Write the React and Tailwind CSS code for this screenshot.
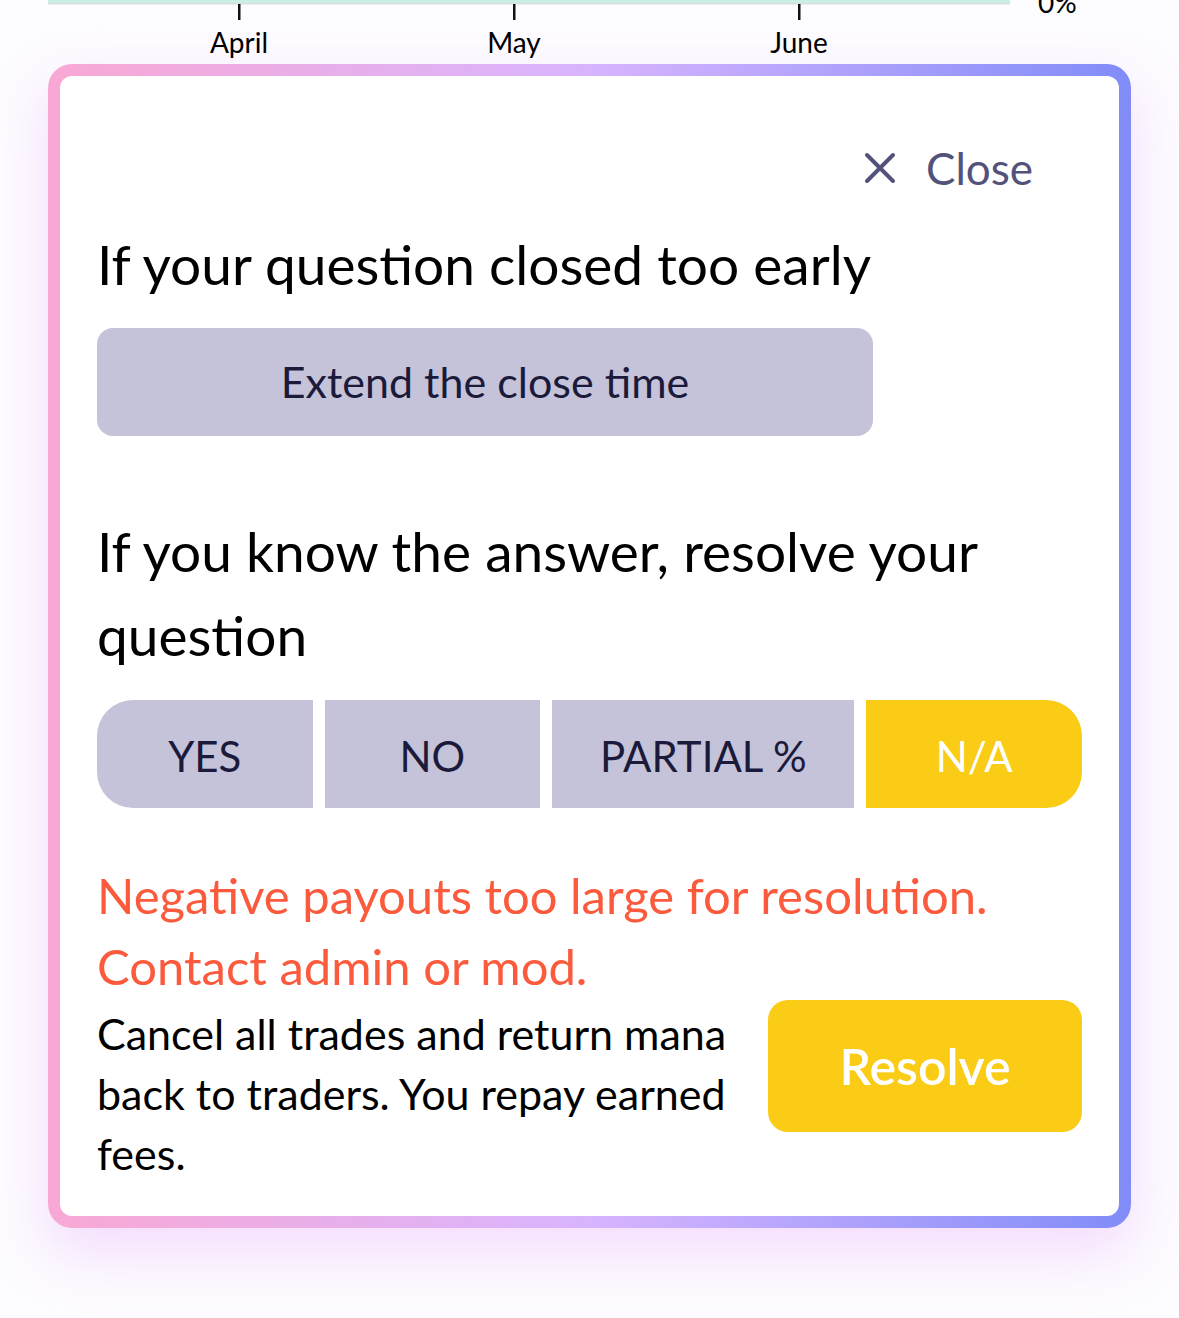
const FONT = { fontFamily: 'Lato, "Noto Sans", sans-serif' }

const TICKS = [
  { label: 'April', x: 191 },
  { label: 'May', x: 466 },
  { label: 'June', x: 751 },
]

function ChartStrip() {
  return (
    <div className="relative h-[64px] w-full">
      <svg className="absolute left-[48px] top-0" width="962" height="24" viewBox="0 0 962 24">
        <rect x="0" y="0" width="962" height="3" fill="#cbeee2" />
        <rect x="0" y="3" width="962" height="1.5" fill="#d9dde0" />
        {TICKS.map(t => (
          <rect key={t.label} x={t.x - 1} y="4" width="2.5" height="16" fill="#111" />
        ))}
      </svg>
      {TICKS.map(t => (
        <span
          key={t.label}
          className="absolute top-[25px] -translate-x-1/2 text-[28px] leading-[34px] text-black"
          style={{ left: 48 + t.x }}
        >
          {t.label}
        </span>
      ))}
      <span className="absolute left-[1038px] top-[-15px] text-[28px] leading-[34px] text-black">0%</span>
    </div>
  )
}

function CloseIcon() {
  return (
    <svg width="32" height="32" viewBox="0 0 32 32" fill="none">
      <path d="M3 3 29 29M29 3 3 29" stroke="#53527a" strokeWidth="4" strokeLinecap="round" />
    </svg>
  )
}

const OUTCOMES = [
  { label: 'YES', w: 'w-[216px]', cls: 'rounded-l-[36px] bg-[#c4c3da] text-[#1c1a3a]' },
  { label: 'NO', w: 'w-[216px]', cls: 'bg-[#c4c3da] text-[#1c1a3a]' },
  { label: 'PARTIAL %', w: 'w-[303px]', cls: 'bg-[#c4c3da] text-[#1c1a3a]' },
  { label: 'N/A', w: 'w-[216px]', cls: 'rounded-r-[36px] bg-[#facc15] text-white' },
]

export default function App() {
  return (
    <div className="min-h-[1318px] w-[1179px] overflow-hidden bg-[#fdfcff]" style={FONT}>
      <ChartStrip />

      <div className="mx-[48px] rounded-[24px] bg-gradient-to-r from-[#f9a8d4] via-[#d8b4fe] to-[#818cf8] p-[12px] shadow-[0_24px_56px_rgba(232,180,250,0.45)]">
        <div className="rounded-[12px] bg-white px-[37px] pt-[68px] pb-[32px]">
          {/* Close */}
          <div className="flex h-[48px] justify-end pr-[49px]">
            <button className="flex items-center gap-[30px] text-[44px] leading-[48px] text-[#53527a]">
              <CloseIcon />
              <span>Close</span>
            </button>
          </div>

          <h2 className="mt-[30px] text-[55px] leading-[84px] text-black">If your question closed too early</h2>

          <button className="mt-[22px] flex h-[108px] w-[776px] items-center justify-center rounded-[16px] bg-[#c4c3da] text-[43px] text-[#1c1a3a]">
            Extend the close time
          </button>

          <h2 className="mt-[73px] text-[55px] leading-[84px] text-black">
            If you know the answer, resolve your question
          </h2>

          <div className="mt-[23px] flex gap-[12px]">
            {OUTCOMES.map(o => (
              <button
                key={o.label}
                className={`flex h-[108px] ${o.w} items-center justify-center pt-[4px] text-[42px] ${o.cls}`}
              >
                {o.label}
              </button>
            ))}
          </div>

          <p className="mt-[52px] text-[49px] leading-[71px] text-[#fb5a3c]">
            Negative payouts too large for resolution. Contact admin or mod.
          </p>

          <div className="-mt-[2px] flex items-start gap-[22px]">
            <p className="flex-1 pt-[4px] text-[43px] leading-[60px] text-black">
              Cancel all trades and return mana back to traders. You repay earned fees.
            </p>
            <button className="flex h-[132px] w-[314px] items-center justify-center rounded-[20px] bg-[#facc15] text-[50px] font-semibold text-white">
              Resolve
            </button>
          </div>
        </div>
      </div>
    </div>
  )
}
